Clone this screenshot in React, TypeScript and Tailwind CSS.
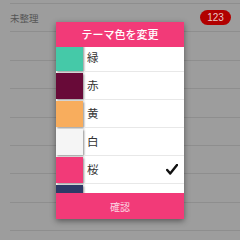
import React from 'react'

const colors = [
  { name: '緑', color: 'bg-[#45c9a8]' },
  { name: '赤', color: 'bg-[#680a38]' },
  { name: '黄', color: 'bg-[#f8ad5d]' },
  { name: '白', color: 'bg-[#f5f5f5]' },
  { name: '桜', color: 'bg-[#f23a78]', selected: true },
  { name: '', color: 'bg-[#2e3a66]' },
]

const font = { fontFamily: '"Noto Sans CJK JP", "Noto Sans", sans-serif' }

const App = () => {
  return (
    <div className='relative w-[240px] h-[240px] overflow-hidden bg-[#9d9d9d]' style={font}>
      {/* background list, dimmed */}
      <div className='flex flex-col -mt-[24.4px]'>
        {Array.from({ length: 10 }).map((_, i) => (
          <div key={i} className='h-[28.4px] shrink-0 ml-[10px] flex items-center justify-between pr-[9px] border-b border-[#8e8e8e]'>
            {i === 1 && (
              <>
                <span className='text-[9.5px] text-[#555]'>未整理</span>
                <span className='h-[15px] w-[31px] text-center rounded-full bg-[#b10000] text-[10px] leading-[15px] text-[#e8c8c8]' style={{ fontFamily: '"Liberation Sans", sans-serif' }}>123</span>
              </>
            )}
          </div>
        ))}
      </div>

      {/* dialog */}
      <div className='absolute left-[56px] top-[22px] w-[128px] h-[197px] flex flex-col bg-white shadow-[0_2px_6px_rgba(0,0,0,0.45)]'>
        <div className='h-[25px] shrink-0 bg-[#f23a78] flex items-center justify-center text-white text-[11px] font-medium'>
          テーマ色を変更
        </div>
        <div className='h-[146px] shrink-0 overflow-hidden'>
          <div className='flex flex-col -mt-[3px]'>
            {colors.map((c, i) => (
              <div key={i} className='h-[28px] shrink-0 flex items-stretch'>
                <div className='w-[28px] py-[1px] shrink-0'>
                  <div className={`w-[27px] h-full ${c.color} shadow-[1px_1px_2px_rgba(0,0,0,0.45)]`} />
                </div>
                <div className='flex-1 flex items-center justify-between pl-[3px] pr-[6px] border-b border-[#e8e8e8]'>
                  <span className='text-[11.5px] text-[#333]'>{c.name}</span>
                  {c.selected && (
                    <svg width='12' height='11' viewBox='0 0 12 11'>
                      <path d='M1.2 6 L4.2 9.6 L11 1' fill='none' stroke='#111' strokeWidth='2.4' strokeLinecap='round' strokeLinejoin='round' />
                    </svg>
                  )}
                </div>
              </div>
            ))}
          </div>
        </div>
        <div className='flex-1 bg-[#f23a78] flex items-center justify-center text-[#fbd6e2] text-[10px]'>
          確認
        </div>
      </div>
    </div>
  )
}

export default App
